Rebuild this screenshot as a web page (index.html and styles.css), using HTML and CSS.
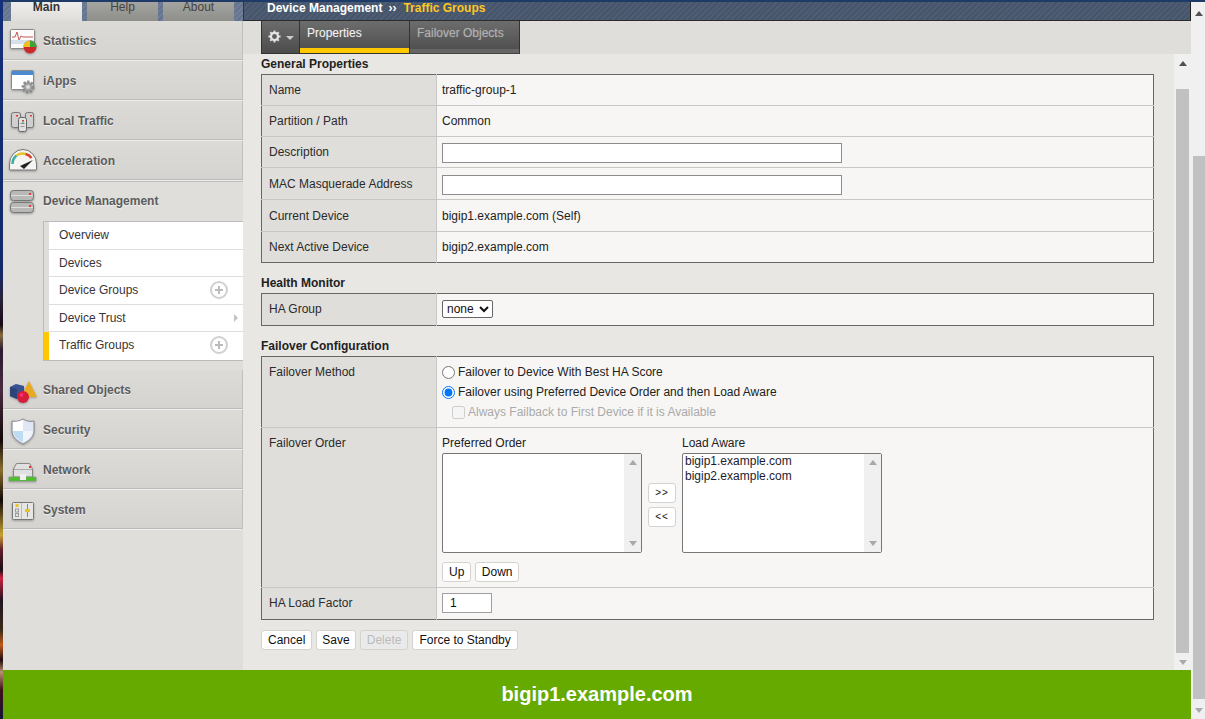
FILE: index.html
```html
<!DOCTYPE html>
<html lang="en">
<head>
<meta charset="utf-8">
<title>Traffic Groups</title>
<link rel="stylesheet" href="styles.css">
</head>
<body>
<div class="app">
  <div class="wallpaper"></div>
  <div class="window">
    <div class="topline"></div>
    <div class="workspace">
      <aside class="sidebar">
        <div class="navtabs">
          <div class="navtab active">Main</div>
          <div class="navtab">Help</div>
          <div class="navtab">About</div>
        </div>
        <div class="menu-item">
          <svg class="mi" viewBox="0 0 35 32"><rect x="2.500" y="4.500" width="24" height="19" rx="1" fill="#fbfbfb" stroke="#8a8a8a"/><rect x="3" y="15" width="23" height="4" fill="#d5e0ec"/><path d="M4 12h3l2-5 2 8 2-4 2 1h10" fill="none" stroke="#c65858"/><circle cx="22" cy="22" r="6.500" fill="#cc2a2a"/><path d="M22 22V15.500a6.500 6.500 0 0 1 6.500 6.500z" fill="#3da33d"/><path d="M22 22V15.500a6.500 6.500 0 0 0-6.500 6.500z" fill="#eec21a"/></svg>
          <span>Statistics</span>
        </div>
        <div class="menu-item">
          <svg class="mi" viewBox="0 0 35 32"><rect x="3.500" y="5.500" width="22" height="19" rx="1" fill="#fff" stroke="#8a8a8a"/><rect x="4" y="6" width="21" height="4" fill="#4d8bd0"/><circle cx="20" cy="22" r="5" fill="#a4a4a4" stroke="#8c8c8c" stroke-width="3" stroke-dasharray="2.200 1.500"/><circle cx="20" cy="22" r="2" fill="#dcdcdc"/></svg>
          <span>iApps</span>
        </div>
        <div class="menu-item">
          <svg class="mi" viewBox="0 0 35 32"><rect x="3.500" y="7.500" width="9" height="15" rx="2" fill="#cfcfcf" stroke="#777"/><rect x="17.500" y="7.500" width="8" height="15" rx="2" fill="#cfcfcf" stroke="#777"/><rect x="10.500" y="12.500" width="8" height="14" rx="2" fill="#e0e0e0" stroke="#666"/><rect x="12.500" y="18" width="4" height="1" fill="#888"/><rect x="12.500" y="21" width="4" height="1" fill="#999"/><rect x="14" y="15" width="2" height="1.500" fill="#e33"/><rect x="8" y="10" width="2" height="1.500" fill="#e33"/><rect x="22" y="10" width="2" height="1.500" fill="#d44"/><rect x="14" y="16.500" width="2" height="1" fill="#4b4"/></svg>
          <span>Local Traffic</span>
        </div>
        <div class="menu-item">
          <svg class="mi" viewBox="0 0 35 32"><path d="M1.500 24v-5a13.500 14.500 0 0 1 27 0v5a1 1 0 0 1-1 1h-25a1 1 0 0 1-1-1z" fill="#f4f4f2" stroke="#777"/><path d="M4.500 19a10.500 11 0 0 1 4-8.500" fill="none" stroke="#38b0a0" stroke-width="2.500"/><path d="M8.500 10.500a10.500 11 0 0 1 9-1.500" fill="none" stroke="#e2c52a" stroke-width="2.500"/><path d="M17.500 9a10.500 11 0 0 1 6 4" fill="none" stroke="#d9402e" stroke-width="2.500"/><path d="M12 21l13-6-9 9z" fill="#222"/></svg>
          <span>Acceleration</span>
        </div>
        <div class="menu-group">
          <div class="menu-item current">
            <svg class="mi" viewBox="0 0 35 32"><rect x="2.500" y="5.500" width="23" height="10" rx="3" fill="#b8b8b6" stroke="#777"/><rect x="2.500" y="17.500" width="23" height="10" rx="3" fill="#b8b8b6" stroke="#777"/><path d="M3 10.500h22M3 22.500h22" stroke="#dedede"/><rect x="21" y="8" width="2" height="2" fill="#e33"/><rect x="21" y="20" width="2" height="2" fill="#e33"/></svg>
            <span>Device Management</span>
          </div>
          <ul class="submenu">
            <li>Overview</li>
            <li>Devices</li>
            <li>Device Groups<i class="plus"></i></li>
            <li>Device Trust<i class="more"></i></li>
            <li class="selected">Traffic Groups<i class="plus"></i></li>
          </ul>
        </div>
        <div class="menu-item">
          <svg class="mi" viewBox="0 0 35 32"><path d="M21 7l8 16H13z" fill="#e8aa22"/><path d="M2 13l6-3 8 2v10l-7 3-7-3z" fill="#3a5390"/><path d="M9 15v10l-7-3v-9z" fill="#2d4478"/><circle cx="15" cy="23" r="6" fill="#d81c3c"/><circle cx="13.500" cy="21" r="1.800" fill="#f37"/></svg>
          <span>Shared Objects</span>
        </div>
        <div class="menu-item">
          <svg class="mi" viewBox="0 0 35 32"><path d="M15 5c3 2 7 3 11 2v10c0 6-5 10-11 13C9 27 4 23 4 17V7c4 1 8 0 11-2z" fill="#dfe6f5" stroke="#8a8a8a"/><path d="M15 6v11H5V8c4 0 7-1 10-2z" fill="#fff"/><path d="M15 17h10c-1 5-5 9-10 11z" fill="#f2f4fb"/><path d="M5 17h10v11c-5-2-9-6-10-11z" fill="#bcdcf2"/></svg>
          <span>Security</span>
        </div>
        <div class="menu-item">
          <svg class="mi" viewBox="0 0 35 32"><path d="M5.500 15l3-5.500h13l3 5.500v8h-19z" fill="#e0e0e0" stroke="#888"/><path d="M6 15.500h18" stroke="#aaa"/><rect x="21" y="12" width="2" height="2" fill="#e33"/><rect x="1" y="23" width="27" height="4" fill="#4ec02e" stroke="#7a9a70" stroke-width=".6"/><rect x="12" y="20" width="6" height="6" fill="#f0f0f0"/></svg>
          <span>Network</span>
        </div>
        <div class="menu-item">
          <svg class="mi" viewBox="0 0 35 32"><rect x="4.500" y="8.500" width="21" height="17" rx="1" fill="#e6e6e4" stroke="#777"/><path d="M13.500 9v16" stroke="#bbb"/><rect x="7.500" y="10" width="3" height="3" fill="#e4c428"/><rect x="7.500" y="15" width="3" height="3" fill="none" stroke="#999"/><rect x="7.500" y="19.500" width="3" height="3" fill="none" stroke="#999"/><path d="M19.500 10v13" stroke="#888"/><rect x="17" y="15" width="5" height="3" fill="#e4c428"/></svg>
          <span>System</span>
        </div>
      </aside>
      <main class="main">
        <div class="titlebar"><b>Device Management</b><span class="sep">››</span><b class="crumb">Traffic Groups</b></div>
        <div class="tabbar">
          <div class="gear">
            <svg class="gear-icon" viewBox="0 0 14 14"><circle cx="7" cy="7" r="3.800" fill="none" stroke="#e4e4e4" stroke-width="2.400"/><path d="M7 .5v3M7 10.500v3M.5 7h3M10.500 7h3M2.400 2.400l2.100 2.100M9.500 9.500l2.100 2.100M11.600 2.400L9.500 4.500M4.500 9.500l-2.100 2.100" stroke="#e4e4e4" stroke-width="2"/></svg>
            <i class="caret"></i>
          </div>
          <div class="tab current">Properties</div>
          <div class="tab">Failover Objects</div>
        </div>
        <div class="content-wrap">
          <div class="content">
            <h2 class="first">General Properties</h2>
            <table class="props">
              <tr class="h31"><th>Name</th><td>traffic-group-1</td></tr>
              <tr class="h31"><th>Partition / Path</th><td>Common</td></tr>
              <tr class="h31"><th>Description</th><td><input class="wide" type="text"></td></tr>
              <tr class="h32"><th>MAC Masquerade Address</th><td><input class="wide" type="text"></td></tr>
              <tr class="h32"><th>Current Device</th><td>bigip1.example.com (Self)</td></tr>
              <tr class="h31"><th>Next Active Device</th><td>bigip2.example.com</td></tr>
            </table>
            <h2>Health Monitor</h2>
            <table class="props">
              <tr class="h32 raised"><th>HA Group</th><td><select class="sel"><option>none</option></select></td></tr>
            </table>
            <h2>Failover Configuration</h2>
            <table class="props">
              <tr class="method">
                <th>Failover Method</th>
                <td>
                  <label class="opt"><input type="radio" name="m">Failover to Device With Best HA Score</label>
                  <label class="opt"><input type="radio" name="m" checked>Failover using Preferred Device Order and then Load Aware</label>
                  <label class="opt sub"><input type="checkbox" disabled>Always Failback to First Device if it is Available</label>
                </td>
              </tr>
              <tr class="order">
                <th>Failover Order</th>
                <td>
                  <div class="lists">
                    <div class="listcol">
                      <div class="listlabel">Preferred Order</div>
                      <div class="listbox"><div class="items"></div><div class="lb-scroll"><i class="up"></i><i class="down"></i></div></div>
                    </div>
                    <div class="movers"><button class="btn mv">&gt;&gt;</button><button class="btn mv">&lt;&lt;</button></div>
                    <div class="listcol">
                      <div class="listlabel">Load Aware</div>
                      <div class="listbox"><div class="items"><div>bigip1.example.com</div><div>bigip2.example.com</div></div><div class="lb-scroll"><i class="up"></i><i class="down"></i></div></div>
                    </div>
                  </div>
                  <div class="updown"><button class="btn">Up</button><button class="btn tight">Down</button></div>
                </td>
              </tr>
              <tr class="h32 raised"><th>HA Load Factor</th><td><input class="factor" type="text" value="1"></td></tr>
            </table>
            <div class="actions">
              <button class="btn">Cancel</button><button class="btn snug">Save</button><button class="btn" disabled>Delete</button><button class="btn">Force to Standby</button>
            </div>
          </div>
          <div class="scrollbar inner"><i class="up dark"></i><div class="track"><div class="thumb"></div></div><i class="down"></i></div>
        </div>
      </main>
    </div>
    <footer class="footer">bigip1.example.com</footer>
  </div>
  <div class="scrollbar outer"><i class="up dark"></i><div class="track"><div class="thumb"></div></div><i class="down"></i></div>
</div>
</body>
</html>
```

FILE: styles.css
```css
* { box-sizing: border-box; }
html, body { margin: 0; height: 100%; overflow: hidden; }
body { font: 12px/14px "Liberation Sans", Arial, sans-serif; color: #1e1e1e; background: #dfdedb; }
.app { display: flex; width: 1205px; height: 719px; }
.wallpaper { width: 3px; background: linear-gradient(180deg, #14307a 0, #13296a 270px, #2a2038 300px, #160c16 325px, #8a6a40 335px, #2a1a30 350px, #4a2a40 390px, #100808 440px, #8a7030 470px, #100808 500px, #c8a030 535px, #601828 550px, #1a1018 570px, #d02040 578px, #201420 600px, #3a2a18 630px, #c05a18 645px, #200c10 660px, #b89070 672px, #401018 690px, #14143a 719px); }
.window { width: 1188px; display: flex; flex-direction: column; }
.topline { height: 2px; background: #1e3a66; }
.workspace { flex: 1; display: flex; min-height: 0; }

.sidebar { width: 240px; background: #dfdedb; }
.navtabs { height: 19px; padding-left: 8px; display: flex; gap: 5px; background: repeating-linear-gradient(135deg, #6f7e97 0 2px, #65748e 2px 4px); }
.navtab { width: 71px; height: 19px; text-align: center; line-height: 11px; color: #444; background: linear-gradient(#a4a4a0, #8e8e8a); }
.navtab.active { font-weight: bold; color: #333; background: linear-gradient(#eeedeb, #dfdedb); }
.menu-item { height: 40px; display: flex; align-items: center; padding: 1px 0 0 5px; font-weight: bold; color: #5c5c5c; background: linear-gradient(#dcdbd7, #d4d3cf); border-bottom: 1px solid #f0efed; border-right: 1px solid #bfbfbc; box-shadow: inset 0 -1px 0 #bbb; }
.menu-item span { text-shadow: 0 1px 0 #eee; }
.mi { width: 35px; height: 32px; flex: none; filter: drop-shadow(0 1px 1px #999); }
.menu-group { height: 189px; background: #dfdedb; }
.menu-item.current { padding: 0 0 1px 5px; background: #dfdedb; box-shadow: none; border-bottom: 0; border-top: 1px solid #bbb; border-right: 0; }
.submenu { list-style: none; margin: 0 0 0 40px; padding: 0; background: #fff; border-top: 1px solid #bbb; border-left: 1px solid #bbb; border-bottom: 1px solid #bbb; }
.submenu li { position: relative; height: 27.500px; line-height: 27px; padding-left: 10px; border-left: 5px solid #dfdedb; border-bottom: 1px solid #dfdedb; color: #3a3436; }
.submenu li:last-child { border-bottom: 0; }
.submenu li.selected { border-left-color: #ffc800; }
.plus { position: absolute; right: 15px; top: 4px; width: 18px; height: 18px; border: 2px solid #d0d0d0; border-radius: 50%; }
.plus::before, .plus::after { content: ""; position: absolute; background: #bbb; }
.plus::before { left: 3px; right: 3px; top: 6px; height: 2px; }
.plus::after { top: 3px; bottom: 3px; left: 6px; width: 2px; }
.more { position: absolute; right: 5px; top: 9px; border: 4px solid transparent; border-left: 4px solid #c4c4c4; border-right: 0; }

.main { flex: 1; min-width: 0; display: flex; flex-direction: column; }
.titlebar { height: 19px; line-height: 12px; padding-left: 23px; color: #fff; background: repeating-linear-gradient(135deg, #4e5d73 0 2px, #46556a 2px 4px); border-left: 1px solid #2c3644; border-right: 1px solid #222; border-bottom: 1px solid #2b2b2b; }
.titlebar .sep { margin: 0 7px 0 6px; font-weight: bold; }
.crumb { color: #ffc81e; }
.tabbar { height: 33px; display: flex; background: #dfdedb; padding-left: 18px; }
.gear { width: 39px; display: flex; align-items: center; gap: 5px; padding: 0 0 2px 6px; background: linear-gradient(#6c6c6c, #4c4c4c); border: 1px solid #333; border-top: 0; }
.gear-icon { width: 13px; height: 13px; }
.caret { border: 4px solid transparent; border-top: 4px solid #ccc; border-bottom: 0; margin-top: 3px; }
.tab { width: 110px; padding: 5px 0 0 7px; color: #b0b0b0; text-shadow: 0 0 1px #8a8a8a; background: linear-gradient(#6d6d6d, #4c4c4c); border: 1px solid #333; border-top: 0; border-left: 0; border-bottom: 1px solid #444; box-shadow: inset 0 -4px 0 #666; }
.tab.current { color: #f0f0f0; box-shadow: inset 0 -5px 0 #ffc800; border-bottom-color: #333; }
.content-wrap { flex: 1; min-height: 0; display: flex; background: #e8e7e4; }
.content { flex: 1; padding: 0 20px 0 18px; }
h2 { margin: 13px 0 3px; font-size: 12px; line-height: 14px; font-weight: bold; color: #222; }
h2.first { margin-top: 3px; }
h2 + .props { margin-top: 3px; }
.props { width: 893px; border-collapse: collapse; table-layout: fixed; border: 1.500px solid #666; }
.props th { width: 175px; text-align: left; font-weight: normal; padding: 0 0 0 7px; background: #dfdedb; border-top: 1px solid #c8c7c4; border-right: 1px solid #c8c7c4; color: #2c2a2a; }
.props td { padding: 0 0 0 5px; background: #f7f6f4; border-top: 1px solid #c8c7c4; color: #222; }
.props tr:first-child th, .props tr:first-child td { border-top: 0; }
.props .raised th, .props .raised td { padding-bottom: 2px; }
.h31 { height: 31px; }
.h32 { height: 32px; }
.wide { display: block; width: 400px; height: 20px; border: 1px solid #8c8c8c; background: #fff; padding: 0; margin: 2px 0 0; }
.sel { width: 51px; height: 18px; display: block; font: 12px "Liberation Sans", Arial, sans-serif; background: #fff; border: 1px solid #666; border-radius: 2px; padding: 0; color: #111; }
.method th, .order th { vertical-align: top; padding-top: 8px; }
.method { height: 71px; }
.method td { vertical-align: top; padding-top: 5px; }
.opt { display: flex; align-items: center; height: 20px; color: #222; }
.opt input { margin: 0 3px 0 0; width: 13px; height: 13px; }
.opt.sub { padding-left: 10px; color: #aaa; }
.order { height: 160px; }
.order td { vertical-align: top; padding-top: 8px; }
.lists { display: flex; align-items: flex-start; }
.listcol { width: 200px; }
.listlabel { height: 17px; line-height: 14px; }
.listbox { display: flex; height: 100px; border: 1px solid #777; border-radius: 2px; background: #fff; }
.items { flex: 1; padding: 0 2px; line-height: 15px; color: #1c1c30; }
.lb-scroll { width: 17px; background: #f0f0f0; display: flex; flex-direction: column; justify-content: space-between; align-items: center; padding: 6px 0; }
.up, .down { display: block; width: 0; height: 0; border: 4px solid transparent; }
.up { border-top: 0; border-bottom: 5px solid #a8a8a8; }
.down { border-bottom: 0; border-top: 5px solid #a8a8a8; }
.up.dark { border-bottom-color: #505050; }
.movers { width: 40px; display: flex; flex-direction: column; align-items: center; gap: 4px; padding-top: 47px; }
.btn { height: 20px; padding: 0 6px; font: 12px/14px "Liberation Sans", Arial, sans-serif; color: #111; background: #fff; border: 1px solid #d4d3d0; border-radius: 3px; }
.btn.tight { padding: 0 5.500px; }
.btn.snug { padding: 0 5px; }
.btn[disabled] { color: #bbb; background: #eaeaea; }
.mv { width: 28px; padding: 0; font-size: 10px; letter-spacing: 1px; }
.updown { display: flex; gap: 4px; margin-top: 9px; }
.factor { display: block; width: 50px; height: 20px; border: 1px solid #a0a0a0; background: #fff; padding: 0 7px; margin: 0; font: 12px "Liberation Sans", Arial, sans-serif; color: #111; }
.actions { display: flex; gap: 4px; margin-top: 10px; }

.scrollbar { display: flex; flex-direction: column; align-items: center; background: #f0f0f0; flex: none; }
.scrollbar .track { flex: 1; width: 100%; display: flex; flex-direction: column; }
.inner { width: 17px; padding: 7px 0 5px; }
.inner .track { padding: 23px 2px 0; }
.inner .thumb { height: 564px; background: #c1c1c1; }
.outer { width: 14px; padding: 9px 0 6px 2px; border-top: 2px solid #1e3a66; }
.outer .track { padding: 140px 0 0; }
.outer .thumb { flex: 1; background: #c1c1c1; margin-bottom: 9px; }
.footer { height: 49px; flex: none; background: #66aa00; color: #fff; font-weight: bold; font-size: 20px; line-height: 49px; text-align: center; }
```
